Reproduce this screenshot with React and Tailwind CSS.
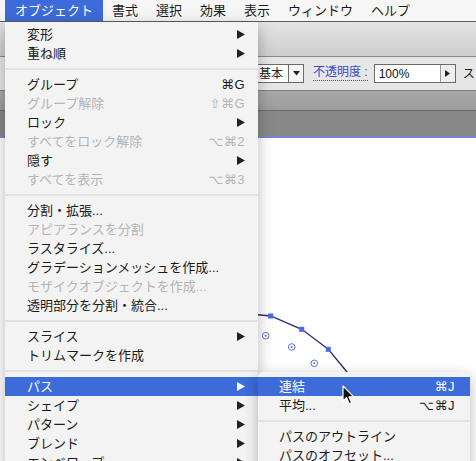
import React from 'react';

const mainItems = [
  { label: '変形', arrow: true },
  { label: '重ね順', arrow: true },
  'sep',
  { label: 'グループ', shortcut: '⌘G' },
  { label: 'グループ解除', shortcut: '⇧⌘G', disabled: true },
  { label: 'ロック', arrow: true },
  { label: 'すべてをロック解除', shortcut: '⌥⌘2', disabled: true },
  { label: '隠す', arrow: true },
  { label: 'すべてを表示', shortcut: '⌥⌘3', disabled: true },
  'sep',
  { label: '分割・拡張...' },
  { label: 'アピアランスを分割', disabled: true },
  { label: 'ラスタライズ...' },
  { label: 'グラデーションメッシュを作成...' },
  { label: 'モザイクオブジェクトを作成...', disabled: true },
  { label: '透明部分を分割・統合...' },
  'sep',
  { label: 'スライス', arrow: true },
  { label: 'トリムマークを作成' },
  'sep',
  { label: 'パス', arrow: true, active: true },
  { label: 'シェイプ', arrow: true },
  { label: 'パターン', arrow: true },
  { label: 'ブレンド', arrow: true },
  { label: 'エンベロープ', arrow: true },
];

const pathItems = [
  { label: '連結', shortcut: '⌘J', active: true },
  { label: '平均...', shortcut: '⌥⌘J' },
  'sep',
  { label: 'パスのアウトライン' },
  { label: 'パスのオフセット...' },
];

const menuBar = ['書式', '選択', '効果', '表示', 'ウィンドウ', 'ヘルプ'];

function Arrow({ white }) {
  return (
    <svg width="8" height="9" viewBox="0 0 8 9">
      <polygon points="0,0 8,4.5 0,9" fill={white ? '#ffffff' : '#222222'} />
    </svg>
  );
}

function MenuRow({ item, pl, pr }) {
  if (item === 'sep') {
    return (
      <div className="h-[12px] flex items-center">
        <div className="h-[2px] w-full bg-[#e1e1e1]" />
      </div>
    );
  }
  const color = item.active ? 'text-white bg-[#3d6bd9]' : item.disabled ? 'text-[#b3b3b3]' : 'text-[#1b1b1b]';
  return (
    <div className={`h-[19px] flex items-center justify-between leading-none ${color} ${pl} ${pr}`}>
      <span>{item.label}</span>
      {item.arrow && <Arrow white={item.active} />}
      {item.shortcut && (
        <span className="font-['Liberation_Sans','DejaVu_Sans',sans-serif] tracking-[0.5px]">{item.shortcut}</span>
      )}
    </div>
  );
}

function Cursor() {
  return (
    <svg width="14" height="22" viewBox="0 0 14 22" className="absolute left-[342px] top-[385px]">
      <path d="M1,1 L1,16 L4.5,12.6 L7.2,18.8 L9.6,17.8 L7,11.8 L11.8,11.8 Z" fill="#111" stroke="#fff" strokeWidth="1.2" strokeLinejoin="round" />
    </svg>
  );
}

export default function App() {
  return (
    <div className="relative w-[476px] h-[461px] overflow-hidden bg-white flex flex-col text-[13px] font-['Liberation_Sans','Noto_Sans_CJK_JP','DejaVu_Sans',sans-serif]">
      {/* menu bar */}
      <div className="h-[22px] shrink-0 flex items-stretch bg-[#f6f6f6] border-b border-[#5d5d5d]">
        <div className="ml-[5px] px-[10px] flex items-center bg-[#3d6bd9] text-white leading-none">オブジェクト</div>
        {menuBar.map((m) => (
          <div key={m} className="px-[9px] flex items-center text-[#1b1b1b] leading-none">{m}</div>
        ))}
      </div>

      {/* toolbar */}
      <div className="h-[35px] shrink-0 bg-gradient-to-b from-[#e4e4e4] to-[#cdcdcd] border-b border-[#8a8a8a]" />

      {/* control bar */}
      <div className="h-[34px] shrink-0 flex items-center bg-[#e6e6e6] border-b border-[#7f7f7f]">
        <div className="w-[230px] shrink-0" />
        <div className="w-[74px] h-[19px] flex bg-white border border-[#6a6a6a]">
          <div className="flex-1 flex items-center justify-end pr-[5px] text-[12px] leading-none text-[#222]">基本</div>
          <div className="w-[15px] flex items-center justify-center border-l border-[#6a6a6a] bg-[#f4f4f4]">
            <svg width="7" height="5" viewBox="0 0 7 5"><polygon points="0,0 7,0 3.5,4.5" fill="#222" /></svg>
          </div>
        </div>
        <div className="ml-[9px] text-[12px] leading-none text-[#3b48c6] border-b border-dotted border-[#3b48c6] pb-[2px]">不透明度 :</div>
        <div className="ml-[6px] w-[82px] h-[19px] flex bg-white border border-[#6a6a6a]">
          <div className="flex-1 flex items-center pl-[4px] text-[12px] leading-none text-[#111]">100%</div>
          <div className="w-[15px] flex items-center justify-center border-l border-[#9a9a9a] bg-[#eeeeee]">
            <svg width="5" height="7" viewBox="0 0 5 7"><polygon points="0,0 5,3.5 0,7" fill="#222" /></svg>
          </div>
        </div>
        <div className="ml-[7px] text-[12px] leading-none text-[#222]">ス</div>
      </div>

      {/* tab bar */}
      <div className="h-[20px] shrink-0 bg-gradient-to-b from-[#a9a9a9] to-[#9c9c9c] border-b border-[#6c6c6c]" />
      <div className="h-[25px] shrink-0 bg-[#888888]" />
      <div className="h-[2px] shrink-0 bg-[#7b84d6]" />

      {/* canvas */}
      <div className="relative flex-1 bg-white">
        <svg className="absolute inset-0" width="476" height="323" viewBox="0 138 476 323">
          <polyline points="200,312 240,313 270.7,316 301.7,329.3 328.3,349.3 347,372 365,400" fill="none" stroke="#2b2f6a" strokeWidth="1.3" />
          {[[270.7, 316], [301.7, 329.3], [328.3, 349.3]].map(([x, y]) => (
            <rect key={x} x={x - 2.5} y={y - 2.5} width="5" height="5" fill="#4d6ae0" />
          ))}
          {[[265.7, 335.7], [291.7, 347], [314.3, 363.3]].map(([x, y]) => (
            <g key={x}>
              <circle cx={x} cy={y} r="3.3" fill="none" stroke="#5b6fd8" strokeWidth="1" />
              <circle cx={x} cy={y} r="1" fill="#5b6fd8" />
            </g>
          ))}
        </svg>
      </div>

      {/* object menu */}
      <div className="absolute left-[5px] top-[22px] w-[253px] pt-[3px] bg-[#f3f3f3] shadow-[0_4px_14px_rgba(0,0,0,0.28)]">
        {mainItems.map((item, i) => (
          <MenuRow key={i} item={item} pl="pl-[22px]" pr="pr-[13px]" />
        ))}
      </div>

      {/* path submenu */}
      <div className="absolute left-[258px] top-[372px] w-[212px] pt-[5px] pb-[6px] bg-[#f3f3f3] rounded-[5px] shadow-[0_4px_14px_rgba(0,0,0,0.28)]">
        {pathItems.map((item, i) => (
          <MenuRow key={i} item={item} pl="pl-[21px]" pr="pr-[15px]" />
        ))}
      </div>

      <Cursor />
    </div>
  );
}
